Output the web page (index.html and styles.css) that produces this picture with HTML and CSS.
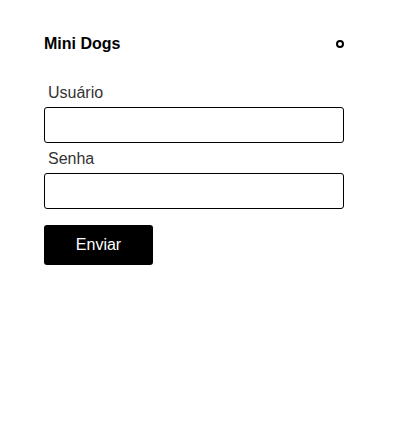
FILE: index.html
```html
<!DOCTYPE html>
<html lang="pt">
<head>
<meta charset="utf-8">
<title>Mini Dogs</title>
<link rel="stylesheet" href="styles.css">
</head>
<body>
<div class="app">
  <header class="header">
    <span class="brand">Mini Dogs</span>
    <span class="ring"></span>
  </header>
  <form class="form">
    <label class="label" for="user">Usuário</label>
    <input class="input" id="user" type="text">
    <label class="label" for="pass">Senha</label>
    <input class="input" id="pass" type="password">
    <button class="btn" type="button">Enviar</button>
  </form>
</div>
</body>
</html>
```
FILE: styles.css
```css
* { box-sizing: border-box; }
html, body { margin: 0; padding: 0; background: #fff; }
body { font-family: "Liberation Sans", Arial, sans-serif; color: #000; }
.app { width: 300px; margin-left: 44px; padding-top: 34px; }
.header { display: flex; justify-content: space-between; align-items: center; height: 20px; }
.brand { font-weight: bold; font-size: 16px; line-height: 20px; }
.ring { width: 8px; height: 8px; border: 2px solid #000; border-radius: 50%; }
.form { display: flex; flex-direction: column; align-items: flex-start; margin-top: 30px; }
.label { font-size: 16px; line-height: 18px; color: #333; padding-left: 4px; margin-bottom: 5px; }
.input { width: 300px; height: 36px; border: 1px solid #000; border-radius: 3px; margin: 0 0 7px; padding: 0 8px; font-size: 16px; }
.btn { margin-top: 9px; width: 109px; height: 40px; background: #000; color: #fff; border: none; border-radius: 3px; font-family: "Liberation Sans", Arial, sans-serif; font-size: 16px; cursor: pointer; }
```
